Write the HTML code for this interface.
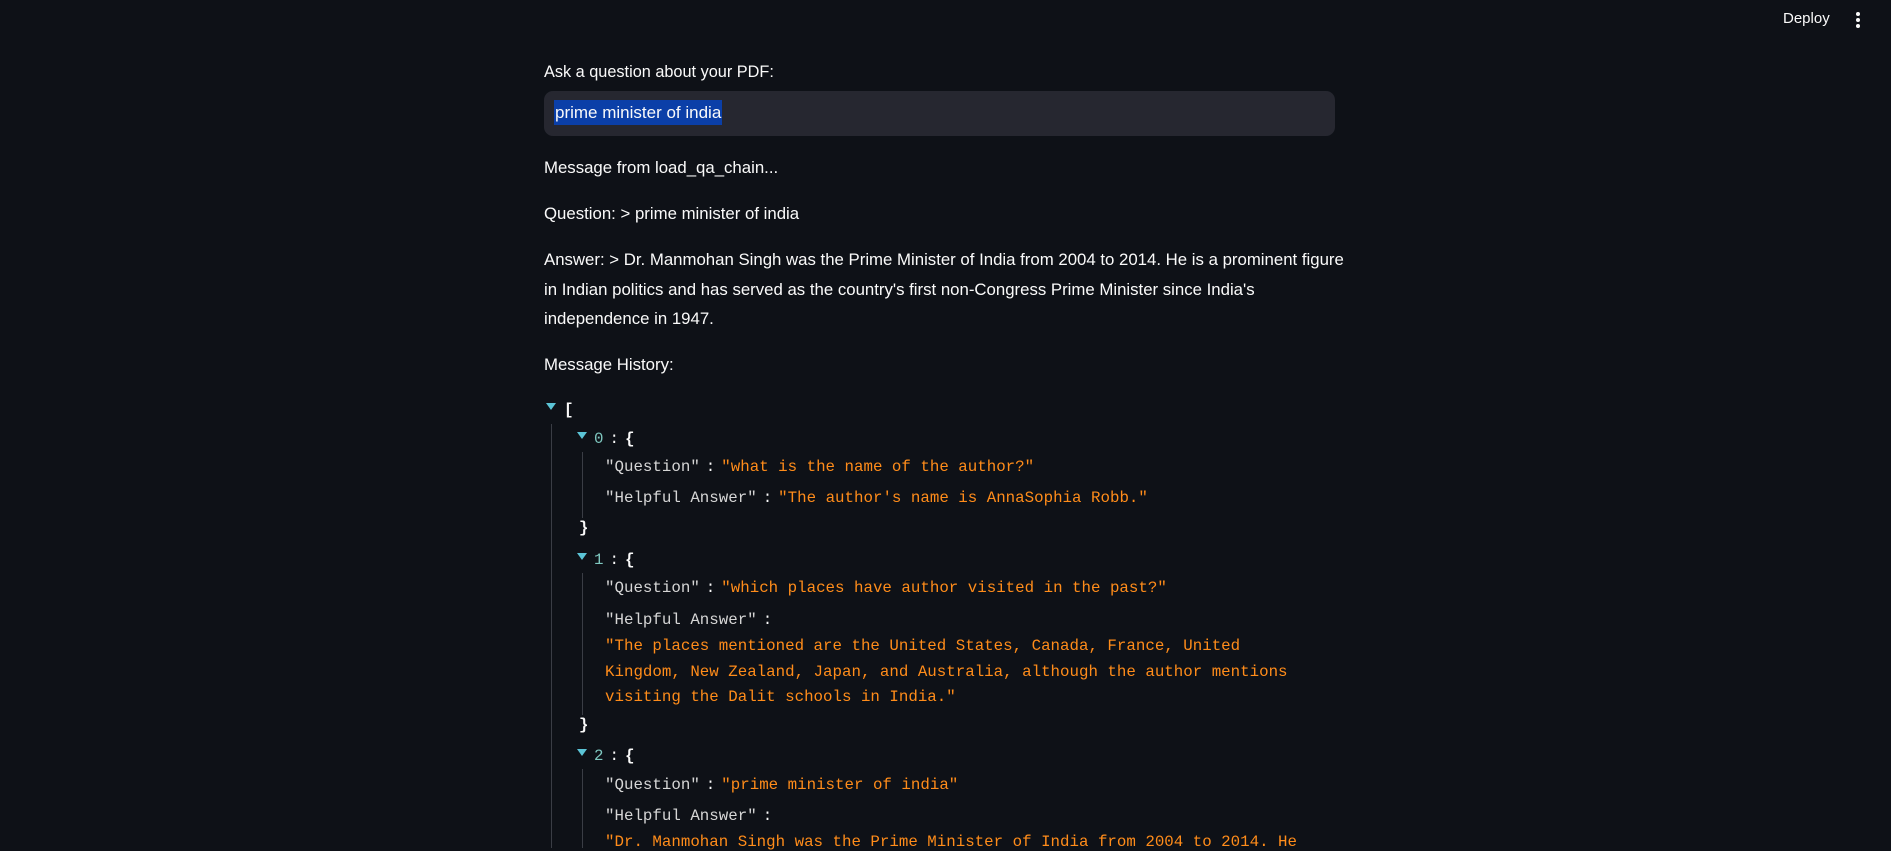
<!DOCTYPE html>
<html><head><meta charset="utf-8"><style>
html,body{margin:0;padding:0;background:#0e1117;width:1891px;height:848px;overflow:hidden;color:#fafafa;font-family:"Liberation Sans",sans-serif}
.a{position:absolute;white-space:nowrap}
.p{font-size:16.8px}
.m{font-family:"Liberation Mono",monospace;font-size:15.8px}
.k{color:#d6d6d6}
.v{color:#ff8c1a}
.c{margin:0 6px;color:#fafafa}
.tri{position:absolute;width:0;height:0;border-left:5.5px solid transparent;border-right:5.5px solid transparent;border-top:7px solid #5bc4d6}
.vl{position:absolute;width:1px;background:#3a3d45}
</style></head><body>
<div class="a" style="left:1783px;top:10px;font-size:15px">Deploy</div>
<div class="a" style="left:1856px;top:12px;width:4px">
<div style="width:4px;height:4px;border-radius:2px;background:#fafafa;margin-bottom:2px"></div>
<div style="width:4px;height:4px;border-radius:2px;background:#fafafa;margin-bottom:2px"></div>
<div style="width:4px;height:4px;border-radius:2px;background:#fafafa"></div></div>

<div class="a" style="left:544px;top:63px;font-size:16.3px">Ask a question about your PDF:</div>
<div class="a" style="left:544px;top:91px;width:791px;height:45px;background:#262730;border-radius:9px"></div>
<div class="a" style="left:554px;top:100px;height:25px;line-height:25px;background:#0b3fa8;font-size:17px;padding:0 1px">prime minister of india</div>

<div class="a p" style="left:544px;top:158px">Message from load_qa_chain...</div>
<div class="a p" style="left:544px;top:204px">Question: &gt; prime minister of india</div>
<div class="a p" style="left:544px;top:250px">Answer: &gt; Dr. Manmohan Singh was the Prime Minister of India from 2004 to 2014. He is a prominent figure</div>
<div class="a p" style="left:544px;top:280px">in Indian politics and has served as the country's first non-Congress Prime Minister since India's</div>
<div class="a p" style="left:544px;top:309px">independence in 1947.</div>
<div class="a p" style="left:544px;top:355px">Message History:</div>

<div class="tri" style="left:546px;top:403px"></div>
<div class="a m" style="left:564px;top:401px;font-weight:bold">[</div>
<div class="vl" style="left:551px;top:424px;height:424px"></div>

<div class="tri" style="left:577px;top:432px"></div>
<div class="a m" style="left:594px;top:430px"><span style="color:#7fc8c0">0</span><span class="c">:</span><b>{</b></div>
<div class="vl" style="left:582px;top:452px;height:66px"></div>
<div class="a m k" style="left:605px;top:458px">"Question"<span class="c">:</span><span class="v">"what is the name of the author?"</span></div>
<div class="a m k" style="left:605px;top:489px">"Helpful Answer"<span class="c">:</span><span class="v">"The author's name is AnnaSophia Robb."</span></div>
<div class="a m" style="left:579px;top:519px;font-weight:bold">}</div>

<div class="tri" style="left:577px;top:553px"></div>
<div class="a m" style="left:594px;top:551px"><span style="color:#7fc8c0">1</span><span class="c">:</span><b>{</b></div>
<div class="vl" style="left:582px;top:573px;height:142px"></div>
<div class="a m k" style="left:605px;top:579px">"Question"<span class="c">:</span><span class="v">"which places have author visited in the past?"</span></div>
<div class="a m k" style="left:605px;top:611px">"Helpful Answer"<span class="c">:</span></div>
<div class="a m v" style="left:605px;top:637px">"The places mentioned are the United States, Canada, France, United</div>
<div class="a m v" style="left:605px;top:663px">Kingdom, New Zealand, Japan, and Australia, although the author mentions</div>
<div class="a m v" style="left:605px;top:688px">visiting the Dalit schools in India."</div>
<div class="a m" style="left:579px;top:716px;font-weight:bold">}</div>

<div class="tri" style="left:577px;top:749px"></div>
<div class="a m" style="left:594px;top:747px"><span style="color:#7fc8c0">2</span><span class="c">:</span><b>{</b></div>
<div class="vl" style="left:582px;top:769px;height:79px"></div>
<div class="a m k" style="left:605px;top:776px">"Question"<span class="c">:</span><span class="v">"prime minister of india"</span></div>
<div class="a m k" style="left:605px;top:807px">"Helpful Answer"<span class="c">:</span></div>
<div class="a m v" style="left:605px;top:833px">"Dr. Manmohan Singh was the Prime Minister of India from 2004 to 2014. He</div>
</body></html>
